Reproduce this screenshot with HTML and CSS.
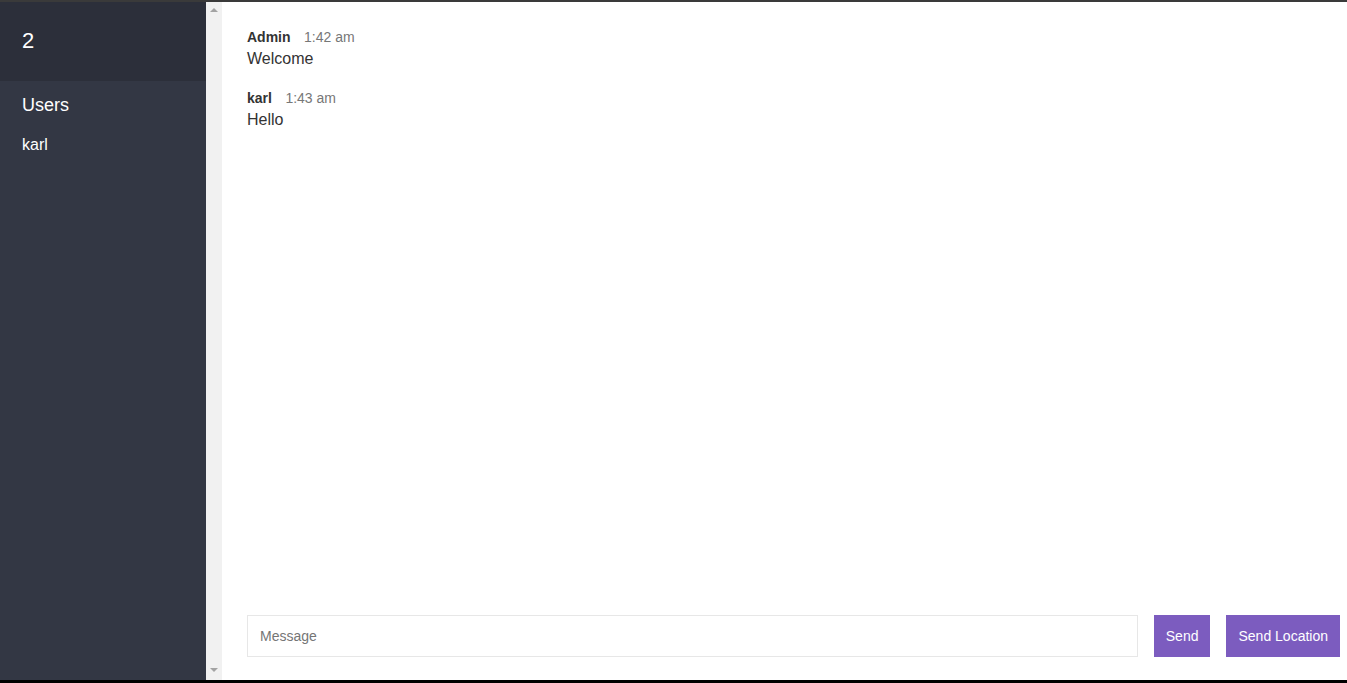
FILE: index.html
```html
<!DOCTYPE html>
<html lang="en">
<head>
    <meta charset="UTF-8">
    <meta name="viewport" content="width=device-width, initial-scale=1.0">
    <title>Chat</title>
    <link rel="stylesheet" href="styles.css">
</head>
<body>
    <div class="chat">
        <div class="chat__sidebar">
            <h2 class="room-title">2</h2>
            <h3 class="list-title">Users</h3>
            <ul class="users">
                <li>karl</li>
            </ul>
        </div>

        <div class="scrollbar">
            <span class="arrow arrow--up"></span>
            <span class="arrow arrow--down"></span>
        </div>

        <div class="chat__main">
            <div id="messages" class="chat__messages">
                <div class="message">
                    <p>
                        <span class="message__name">Admin</span>
                        <span class="message__meta">1:42 am</span>
                    </p>
                    <p class="message__text">Welcome</p>
                </div>
                <div class="message">
                    <p>
                        <span class="message__name">karl</span>
                        <span class="message__meta">1:43 am</span>
                    </p>
                    <p class="message__text">Hello</p>
                </div>
            </div>

            <div class="compose">
                <form id="message-form">
                    <input name="message" placeholder="Message" autocomplete="off">
                    <button type="button">Send</button>
                </form>
                <button id="send-location" type="button">Send Location</button>
            </div>
        </div>
    </div>
</body>
</html>
```

FILE: styles.css
```css
* {
    box-sizing: border-box;
}
body {
    margin: 0;
    padding: 0;
    font-family: "Liberation Sans", Arial, sans-serif;
    font-size: 16px;
    color: #333;
    border-top: 2px solid #3a3a3a;
    border-bottom: 3px solid #000;
    background: #fff;
}
p, h2, h3, ul {
    margin: 0;
    padding: 0;
}
.chat {
    display: flex;
    height: 678px;
}
.chat__sidebar {
    width: 206px;
    flex-shrink: 0;
    background: #333744;
    color: white;
}
.room-title {
    height: 79px;
    padding: 26px 22px 0;
    font-size: 22px;
    font-weight: 400;
    background: #2c2f3a;
}
.list-title {
    padding: 14px 22px 0;
    font-size: 18px;
    font-weight: 400;
}
.users {
    list-style: none;
    padding: 20px 22px 0;
}
.users li {
    font-size: 16px;
}
.scrollbar {
    width: 16px;
    flex-shrink: 0;
    background: #f1f1f1;
    display: flex;
    flex-direction: column;
    justify-content: space-between;
    align-items: center;
    padding: 6px 0 8px;
}
.arrow {
    width: 0;
    height: 0;
    border-left: 4px solid transparent;
    border-right: 4px solid transparent;
}
.arrow--up {
    border-bottom: 4px solid #a3a3a3;
}
.arrow--down {
    border-top: 4px solid #a3a3a3;
}
.chat__main {
    flex-grow: 1;
    display: flex;
    flex-direction: column;
}
.chat__messages {
    flex-grow: 1;
    padding: 26px 25px 0;
}
.message {
    margin-bottom: 21px;
}
.message__name {
    font-weight: 700;
    font-size: 14px;
    margin-right: 9px;
    color: #333;
}
.message__meta {
    font-size: 14px;
    color: #777;
}
.message__text {
    margin-top: 3px;
    font-size: 16px;
    line-height: 19px;
}
.compose {
    display: flex;
    padding: 0 7px 23px 25px;
}
.compose form {
    display: flex;
    flex-grow: 1;
    margin-right: 16px;
}
.compose input {
    flex-grow: 1;
    height: 42px;
    border: 1px solid #e7e7e7;
    padding: 0 12px;
    margin-right: 16px;
    font-family: inherit;
    font-size: 14px;
}
.compose input::placeholder {
    color: #757575;
}
button {
    height: 42px;
    padding: 0 12px;
    border: none;
    background: #7c5cbf;
    color: white;
    font-family: inherit;
    font-size: 14px;
    cursor: pointer;
}
```
